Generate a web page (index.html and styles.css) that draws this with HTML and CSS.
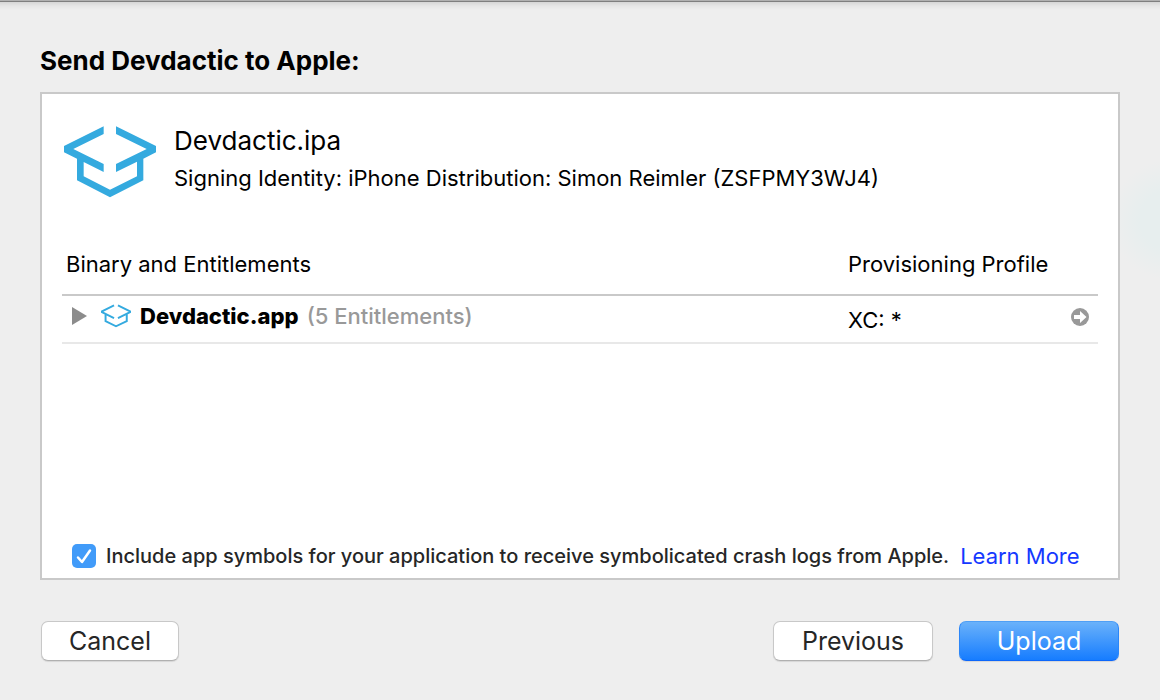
FILE: index.html
```html
<!DOCTYPE html>
<html lang="en">
<head>
<meta charset="utf-8">
<meta name="viewport" content="width=device-width, initial-scale=1">
<title>Send Devdactic to Apple</title>
<link rel="stylesheet" href="styles.css">
</head>
<body>
<form class="sheet">
  <h1 class="title">Send Devdactic to Apple:</h1>
  <main class="panel">
    <header class="package">
      <svg class="package-logo" viewBox="42 50 276 214" aria-hidden="true">
        <path fill="#34aadf" d="M161 50 42 109V128L81 147V212L180 263 280 212V147L318 128V109L198 50V73L290 118 198 163V187L261 156V200L180 240 101 200V157L161 187V163L70 118 161 73Z"/>
      </svg>
      <div class="package-text">
        <h2 class="package-name">Devdactic.ipa</h2>
        <p class="package-identity">Signing Identity: iPhone Distribution: Simon Reimler (ZSFPMY3WJ4)</p>
      </div>
    </header>
    <table class="binaries">
      <thead>
        <tr>
          <th class="binary-col" scope="col">Binary and Entitlements</th>
          <th class="profile-col" scope="col">Provisioning Profile</th>
        </tr>
      </thead>
      <tbody>
        <tr>
          <td>
            <div class="binary">
              <button class="icon-button" type="button" aria-label="Show entitlements">
                <svg class="disclosure" viewBox="0 0 16 18"><path fill="#8c8c8c" d="M0 0 15 9 0 18Z"/></svg>
              </button>
              <svg class="binary-logo" viewBox="152 193 92 71" aria-hidden="true">
                <path fill="none" stroke="#34aadf" stroke-width="6" d="M192 196 155 214V217L192 235M204 196 241 214V217L204 235M166 223V244L198 260 231 244V223"/>
              </svg>
              <span class="binary-label"><b>Devdactic.app</b> <span class="muted">(5 Entitlements)</span></span>
            </div>
          </td>
          <td>
            <div class="profile">
              <span class="profile-name">XC: *</span>
              <button class="icon-button" type="button" aria-label="Show profile">
                <svg class="reveal" viewBox="0 0 18 18"><circle cx="9" cy="9" r="9" fill="#999"/><path fill="#fff" d="M3 7H9V3L15.500 9 9 15V11H3Z"/></svg>
              </button>
            </div>
          </td>
        </tr>
      </tbody>
    </table>
    <div class="symbols">
      <input class="check" type="checkbox" id="symbols" checked>
      <label class="symbols-label" for="symbols">Include app symbols for your application to receive symbolicated crash logs from Apple.</label>
      <a class="learn" href="#learn-more">Learn More</a>
    </div>
  </main>
  <footer class="actions">
    <button class="button cancel" type="button">Cancel</button>
    <button class="button" type="button">Previous</button>
    <button class="button primary" type="submit">Upload</button>
  </footer>
</form>
</body>
</html>
```
FILE: styles.css
```css
* {
  box-sizing: border-box;
}

body {
  margin: 0;
  font-family: Inter, "Liberation Sans", sans-serif;
  font-size: 22px;
  line-height: 28px;
  color: #000;
  background:
    linear-gradient(#b0b0b0 0 1px, #7f7f7f 1px 2px, #d6d6d6 2px, #e6e6e6 6px, transparent 10px) top / 100% 10px no-repeat,
    radial-gradient(circle 60px at calc(100% + 10px) 220px, #e7eeee 50%, #eee) no-repeat,
    #eee;
}

.sheet {
  display: flex;
  flex-direction: column;
  min-height: 100vh;
  padding: 45px 40px 39px;
}

.title {
  margin: 0 0 15px;
  font-size: 26px;
  line-height: 32px;
  font-weight: 700;
}

.panel {
  display: flex;
  flex: 1;
  flex-direction: column;
  padding: 32px 20px 8px;
  background: #fff;
  border: 2px solid #c9c9c9;
}

.package {
  display: flex;
  gap: 18px;
  padding-left: 2px;
}

.package-logo {
  flex: none;
  width: 92px;
  height: 72px;
}

.package-name {
  margin: 0 0 8px;
  font-size: 26px;
  line-height: 30px;
  font-weight: 400;
}

.package-identity {
  margin: 0;
}

.binaries {
  width: 100%;
  margin-top: 48px;
  border-collapse: collapse;
  table-layout: fixed;
}

.binaries th {
  padding: 4px 4px 16px;
  font-weight: 400;
  text-align: left;
  border-bottom: 2px solid #c9c9c9;
}

.binaries td {
  height: 48px;
  padding: 0 4px;
  vertical-align: top;
  border-bottom: 2px solid #e8e8e8;
}

.profile-col {
  width: 254px;
}

.binary {
  display: flex;
  align-items: center;
  padding: 6px;
}

.binary-label b {
  margin-right: 2px;
  font-weight: 800;
}

.icon-button {
  display: flex;
  padding: 0;
  background: none;
  border: 0;
}

.disclosure {
  width: 16px;
  height: 18px;
}

.binary-logo {
  width: 30px;
  height: 24px;
  margin: 0 9px 0 13px;
}

.muted {
  font-weight: 500;
  color: #999;
}

.profile {
  display: flex;
  align-items: flex-start;
  justify-content: space-between;
  padding: 12px 5px 0 0;
}

.profile-name {
  line-height: 24px;
}

.reveal {
  width: 18px;
  height: 18px;
}

.symbols {
  display: flex;
  align-items: center;
  margin-top: auto;
  padding-left: 10px;
}

.check {
  flex: none;
  width: 24px;
  height: 24px;
  margin: 0 10px 0 0;
  appearance: none;
  border-radius: 5px;
  background: #419bf9 url("data:image/svg+xml,%3Csvg xmlns='http://www.w3.org/2000/svg' viewBox='0 0 24 24'%3E%3Cpath d='M6 13.500 10 18 18 6.500' fill='none' stroke='white' stroke-width='2.500' stroke-linecap='round' stroke-linejoin='round'/%3E%3C/svg%3E");
}

.symbols-label {
  margin-right: 11px;
  font-size: 20px;
  font-weight: 500;
  color: #262626;
}

.learn {
  color: #1538ff;
  text-decoration: none;
}

.actions {
  display: flex;
  gap: 26px;
  margin-top: 41px;
  padding: 0 1px;
}

.button {
  width: 160px;
  height: 40px;
  padding: 0;
  font: inherit;
  font-size: 25px;
  line-height: 38px;
  color: #262626;
  background: #fff;
  border: 1px solid #c8c8c8;
  border-bottom-color: #b0b0b0;
  border-radius: 7px;
  box-shadow: 0 1px 1px rgba(0, 0, 0, 0.1);
}

.cancel {
  width: 138px;
  margin-right: auto;
}

.primary {
  color: #fff;
  background: linear-gradient(#6cb3fa, #147bff) border-box;
  border-color: #4f9ff5 #2b86f8 #0c66fa;
}
```
